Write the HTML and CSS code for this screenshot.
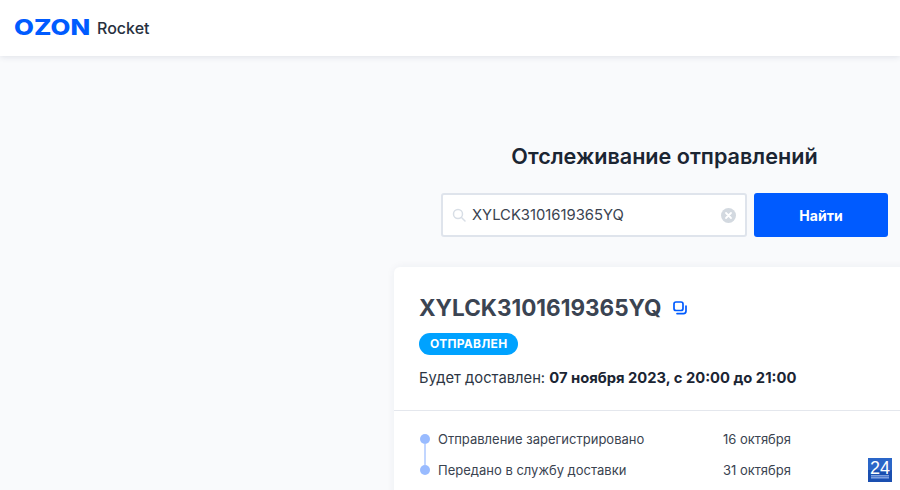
FILE: index.html
```html
<!DOCTYPE html>
<html>
<head>
  <title>Ozon Rocket</title>
  <link rel="stylesheet" href="styles.css">
</head>
<body>
  <header class="header">
    <span class="logo-ozon">OZON</span>
    <span class="logo-rocket">Rocket</span>
  </header>

  <main class="main">
    <h1 class="title">Отслеживание отправлений</h1>

    <form class="search">
      <div class="search-field">
        <svg class="search-icon" width="14" height="14" viewBox="0 0 14 14" fill="none">
          <circle cx="6" cy="6" r="4.5" stroke="#d8dee6" stroke-width="1.5"/>
          <path d="M9.5 9.5L13 13" stroke="#d8dee6" stroke-width="1.5" stroke-linecap="round"/>
        </svg>
        <span class="search-value">XYLCK3101619365YQ</span>
        <svg class="clear-icon" width="15" height="15" viewBox="0 0 15 15" fill="none">
          <circle cx="7.5" cy="7.5" r="7.5" fill="#d3d9e0"/>
          <path d="M5 5L10 10M10 5L5 10" stroke="#fff" stroke-width="1.8" stroke-linecap="round"/>
        </svg>
      </div>
      <button class="search-btn" type="button">Найти</button>
    </form>

    <section class="card">
      <div class="card-top">
        <div class="track">
          <span class="track-number">XYLCK3101619365YQ</span>
          <svg width="14" height="14" viewBox="0 0 14 14" fill="none">
            <rect x="1" y="1" width="9" height="8.5" rx="2" stroke="#005bff" stroke-width="1.7"/>
            <path d="M4 12.6H10.5C11.9 12.6 13 11.5 13 10.1V5" stroke="#005bff" stroke-width="1.7" stroke-linecap="round"/>
          </svg>
        </div>
        <span class="status">ОТПРАВЛЕН</span>
        <p class="delivery">Будет доставлен: <b>07 ноября 2023, с 20:00 до 21:00</b></p>
      </div>

      <ul class="history">
        <li class="history-row">
          <span class="dot"></span>
          <span class="history-text">Отправление зарегистрировано</span>
          <span class="history-date">16 октября</span>
        </li>
        <li class="history-row">
          <span class="dot"></span>
          <span class="history-text">Передано в службу доставки</span>
          <span class="history-date">31 октября</span>
        </li>
      </ul>
    </section>
  </main>

  <div class="badge">24</div>
</body>
</html>
```

FILE: styles.css
```css
html, body { height: 100%; }
body {
  margin: 0;
  overflow: hidden;
  background: #f9fafc;
  font-family: Inter, "Liberation Sans", sans-serif;
  color: #1b2533;
}

.header {
  display: flex;
  align-items: center;
  height: 56px;
  padding: 0 14px;
  box-sizing: border-box;
  background: #fff;
  box-shadow: 0 1px 6px rgba(30, 50, 80, 0.12);
}
.logo-ozon {
  width: 76px;
  margin-top: -2px;
  color: #005bff;
  font-size: 22px;
  font-weight: 800;
  line-height: 1;
  transform: scaleX(1.17);
  transform-origin: left center;
}
.logo-rocket {
  margin-left: 7px;
  color: #27303e;
  font-size: 16px;
  font-weight: 500;
}

.main {
  width: 541px;
  margin-left: 394px;
  padding-top: 87px;
}
.title {
  margin: 0;
  text-align: center;
  font-size: 21.6px;
  font-weight: 600;
  line-height: 26px;
}

.search {
  display: flex;
  gap: 7px;
  width: 447px;
  margin: 24px auto 0;
}
.search-field {
  display: flex;
  align-items: center;
  flex: 1;
  height: 44px;
  padding: 0 9px;
  box-sizing: border-box;
  background: #fff;
  border: 2px solid #dfe4ec;
  border-radius: 3px;
}
.search-icon { margin-right: 6px; }
.search-value {
  flex: 1;
  font-size: 14.8px;
  color: #3a4350;
}
.search-btn {
  width: 134px;
  height: 44px;
  background: #005bff;
  color: #fff;
  border: none;
  border-radius: 3px;
  font-family: inherit;
  font-size: 14px;
  font-weight: 700;
}

.card {
  height: 240px;
  margin-top: 30px;
  background: #fff;
  border-radius: 6px 0 0 0;
  box-shadow: 0 0 8px rgba(30, 50, 80, 0.06);
}
.card-top {
  padding: 27px 25px 22px;
  border-bottom: 1px solid #e4e7ed;
}
.track {
  display: flex;
  align-items: center;
  gap: 12px;
}
.track-number {
  font-size: 22.5px;
  font-weight: 700;
  line-height: 27px;
  color: #3b4452;
}
.status {
  display: inline-block;
  margin-top: 12px;
  padding: 0 11px;
  background: #00a2ff;
  color: #fff;
  border-radius: 11px;
  font-size: 12px;
  font-weight: 700;
  line-height: 22px;
  letter-spacing: 0.3px;
}
.delivery {
  margin: 13px 0 0;
  font-size: 14.75px;
  line-height: 20px;
  color: #2d3644;
}
.delivery b { font-weight: 700; color: #1b2533; }

.history {
  margin: 0;
  padding: 12px 26px 0;
  list-style: none;
}
.history-row {
  display: flex;
  align-items: center;
  height: 31px;
  font-size: 13px;
  color: #3a4350;
}
.dot {
  position: relative;
  width: 10px;
  height: 10px;
  margin-right: 8px;
  background: #99bbff;
  border-radius: 50%;
}
.history-row:first-child .dot::after {
  content: "";
  position: absolute;
  left: 4px;
  top: 10px;
  width: 2px;
  height: 21px;
  background: #c2d6ff;
}
.history-text { width: 285px; }

.badge {
  position: absolute;
  left: 868px;
  top: 458px;
  width: 24px;
  height: 24px;
  background: repeating-linear-gradient(#7f9fdc 0 1px, #4f7bd0 1px 2px) 3px 17px / 18px 4px no-repeat, linear-gradient(#2a66c8 50%, #1a4fb0 50%);
  color: #fff;
  font-family: "Liberation Sans", sans-serif;
  font-size: 18px;
  line-height: 20px;
  text-align: center;
}
```
